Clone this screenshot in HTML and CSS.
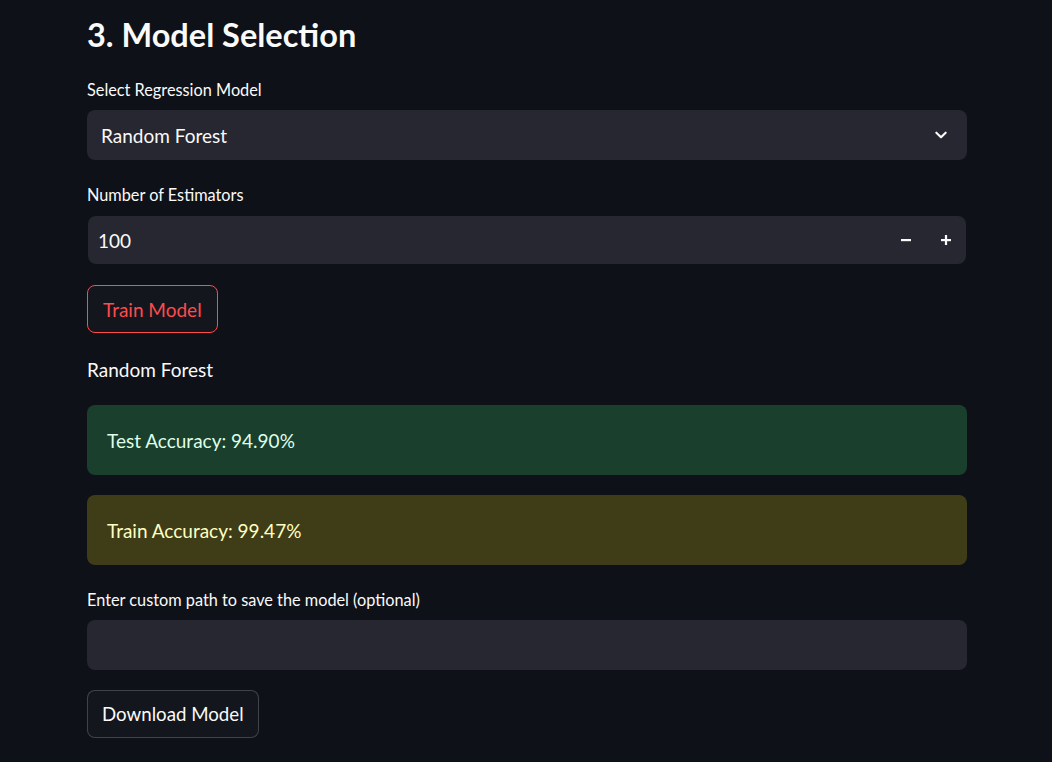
FILE: index.html
```html
<!DOCTYPE html>
<html>
<head>
<meta charset="utf-8">
<link rel="stylesheet" href="styles.css">
</head>
<body>
<main class="main">
  <h3 class="heading">3. Model Selection</h3>

  <div class="field">
    <label class="label">Select Regression Model</label>
    <div class="select">
      <span class="select-value">Random Forest</span>
      <svg class="chevron" width="16" height="16" viewBox="0 0 24 24"><path d="M5 8.5l7 7 7-7" fill="none" stroke="#fafafa" stroke-width="3.2" stroke-linecap="round" stroke-linejoin="round"/></svg>
    </div>
  </div>

  <div class="field field-num">
    <label class="label">Number of Estimators</label>
    <div class="number">
      <span class="number-value">100</span>
      <div class="steps">
        <span class="step"><svg width="12" height="12" viewBox="0 0 12 12"><rect x="1" y="5" width="10" height="2.2" fill="#fafafa"/></svg></span>
        <span class="step"><svg width="12" height="12" viewBox="0 0 12 12"><rect x="1" y="5" width="10" height="2.2" fill="#fafafa"/><rect x="4.9" y="1" width="2.2" height="10" fill="#fafafa"/></svg></span>
      </div>
    </div>
  </div>

  <button class="btn btn-primary">Train Model</button>

  <p class="text">Random Forest</p>

  <div class="alert alert-success">Test Accuracy: 94.90%</div>
  <div class="alert alert-warning">Train Accuracy: 99.47%</div>

  <div class="field field-path">
    <label class="label">Enter custom path to save the model (optional)</label>
    <div class="textinput"></div>
  </div>

  <button class="btn btn-secondary btn-download">Download Model</button>
</main>
</body>
</html>
```

FILE: styles.css
```css
html, body {
  margin: 0;
  padding: 0;
  background: #0e1117;
  color: #fafafa;
  font-family: Lato, "Open Sans", sans-serif;
}
.main {
  width: 880px;
  margin-left: 87px;
  padding-top: 13px;
  display: flex;
  flex-direction: column;
  align-items: flex-start;
}
.heading {
  margin: 0;
  font-size: 32.5px;
  font-weight: 700;
  line-height: 43px;
  height: 43px;
}
.field {
  width: 100%;
  display: flex;
  flex-direction: column;
}
.label {
  font-size: 16.3px;
  line-height: 20px;
  margin-top: 24px;
  margin-bottom: 10px;
}
.field-num .label {
  margin-top: 25px;
  margin-bottom: 11px;
}
.field-path .label {
  margin-top: 25px;
  margin-bottom: 10px;
}
.select {
  height: 50px;
  background: #262730;
  border-radius: 8px;
  display: flex;
  align-items: center;
  justify-content: space-between;
  padding: 0 18px 0 14px;
  box-sizing: border-box;
}
.select-value { font-size: 19px; }
.chevron { display: block; }
.number {
  height: 48px;
  margin: 0 1px;
  background: #262730;
  border-radius: 8px;
  display: flex;
  align-items: center;
  justify-content: space-between;
  padding: 0 0 0 10px;
  box-sizing: border-box;
}
.number-value { font-size: 19px; }
.steps { display: flex; height: 100%; }
.step {
  width: 40px;
  display: flex;
  align-items: center;
  justify-content: center;
}
.step svg { display: block; }
.btn {
  font-family: inherit;
  font-size: 19px;
  height: 48px;
  padding: 0 15px;
  border-radius: 8px;
  margin-top: 21px;
  cursor: pointer;
}
.btn-download {
  margin-top: 20px;
  padding: 0 14px;
  font-size: 18.7px;
}
.btn-primary {
  color: #ff4b4b;
  border: 1px solid #ff4b4b;
  background: #13161d;
}
.btn-secondary {
  color: #fafafa;
  border: 1px solid rgba(250, 250, 250, 0.2);
  background: #13161d;
}
.text {
  margin: 25px 0 0 0;
  font-size: 19px;
  line-height: 24px;
}
.alert {
  width: 100%;
  box-sizing: border-box;
  height: 70px;
  border-radius: 8px;
  display: flex;
  align-items: center;
  padding: 0 20px;
  font-size: 19px;
}
.alert-success {
  margin-top: 23px;
  background: #1a3f2d;
  color: #dffde9;
}
.alert-warning {
  margin-top: 20px;
  background: #3f3c18;
  color: #ffffc2;
}
.textinput {
  height: 50px;
  background: #262730;
  border-radius: 8px;
}
```
